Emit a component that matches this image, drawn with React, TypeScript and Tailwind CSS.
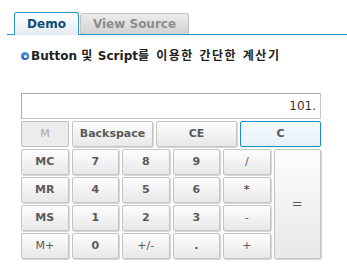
import React from "react";

const font = "font-['DejaVu_Sans','Noto_Sans_CJK_KR',sans-serif]";

function Key({
  label,
  className = "",
  weak = false,
}: {
  label: string;
  className?: string;
  weak?: boolean;
}) {
  return (
    <button
      className={`flex items-center justify-center rounded-[2px] border border-[#c4c4c4] bg-linear-to-b from-[#fdfdfd] to-[#e8e8e8] text-[11px] text-[#5a5a5a] shadow-[1px_1px_1px_rgba(0,0,0,0.18)] ${
        weak ? "font-normal" : "font-bold"
      } ${className}`}
    >
      {label}
    </button>
  );
}

export default function App() {
  return (
    <div className={`h-[268px] w-[347px] bg-white ${font}`}>
      {/* Tabs */}
      <div className="ml-[7px] flex border-b border-[#2a93c8] pt-[12px] pl-[7px]">
        <div className="-mb-px flex h-[23px] w-[65px] items-center justify-center rounded-t-[3px] border border-b-0 border-[#2a93c8] bg-linear-to-b from-white to-[#e4ecf1] text-[12px] font-bold text-[#0d4c77]">
          Demo
        </div>
        <div className="ml-[1px] mt-[1px] flex h-[21px] w-[109px] items-center justify-center rounded-t-[3px] border border-b-0 border-[#c2c2c2] bg-linear-to-b from-[#ececec] to-[#d2d2d2] text-[12px] font-bold text-[#8c8c8c]">
          View Source
        </div>
      </div>

      {/* Title */}
      <div className="mt-[12px] ml-[21px] flex items-center gap-[2px]">
        <span className="flex h-[8px] w-[8px] items-center justify-center rounded-full bg-linear-to-b from-[#5b9be0] to-[#1f5fb5]">
          <span className="h-[3px] w-[3px] rounded-full bg-white" />
        </span>
        <span className="text-[12px] font-bold text-[#222]">
          Button <span className="tracking-[1.5px]">및</span> Script
          <span className="tracking-[1.5px]">를 이용한 간단한 계산기</span>
        </span>
      </div>

      {/* Calculator */}
      <div className="mt-[28px] ml-[21px] w-[300px]">
        <div className="flex h-[26px] items-center justify-end border border-[#a9a9a9] border-r-[#c6c6c6] border-b-[#c6c6c6] pr-[4px] text-[12px] text-[#333]">
          101.
        </div>
        <div className="mt-[2px] flex h-[26px] gap-[3px]">
          <button className="flex w-[48px] items-center justify-center rounded-[2px] border border-[#bdbdbd] bg-[#ececec] text-[11px] text-[#aaa]">
            M
          </button>
          <Key label="Backspace" className="flex-1" />
          <Key label="CE" className="flex-1" />
          <button className="flex flex-1 items-center justify-center rounded-[2px] border border-[#1c8fcb] bg-linear-to-b from-[#f4f9fc] to-[#e6f1f7] text-[11px] font-bold text-[#5a5a5a]">
            C
          </button>
        </div>
        <div className="mt-[2px] grid grid-cols-6 grid-rows-[repeat(4,26px)] gap-x-[3px] gap-y-[2px]">
          <Key label="MC" />
          <Key label="7" />
          <Key label="8" />
          <Key label="9" />
          <Key label="/" weak />
          <Key label="=" weak className="row-span-4 text-[13px]" />
          <Key label="MR" />
          <Key label="4" />
          <Key label="5" />
          <Key label="6" />
          <Key label="*" />
          <Key label="MS" />
          <Key label="1" />
          <Key label="2" />
          <Key label="3" />
          <Key label="-" weak />
          <Key label="M+" weak />
          <Key label="0" />
          <Key label="+/-" weak />
          <Key label="." />
          <Key label="+" weak />
        </div>
      </div>
    </div>
  );
}
